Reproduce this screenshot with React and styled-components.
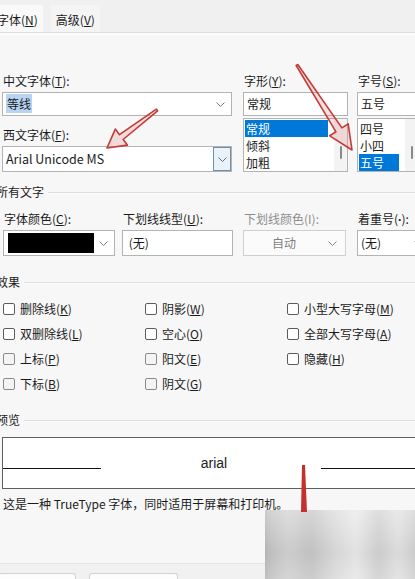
import React from "react";
import styled, { createGlobalStyle } from "styled-components";

const GlobalStyle = createGlobalStyle`
  html, body {
    margin: 0;
    padding: 0;
    background: #f7f7f7;
    overflow: hidden;
  }
  body {
    font-family: "Noto Sans CJK SC", "Noto Sans", sans-serif;
    font-size: 12px;
    color: #1b1b1b;
  }
  u {
    text-underline-offset: 1px;
  }
`;

const Page = styled.div`
  position: relative;
  width: 415px;
  height: 579px;
  overflow: hidden;
  background: #f7f7f7;
`;

const TabStrip = styled.div`
  display: flex;
  align-items: flex-end;
  gap: 8px;
  height: 32px;
  background: #f0f0f0;
  border-bottom: 1px solid #dedede;
  box-shadow: 0 3px 0 #fbfbfb;
`;

const Tab = styled.div`
  height: 27px;
  line-height: 29px;
  padding: 0 5px;
  margin-left: ${(p) => (p.$first ? "-8px" : "0")};
  background: ${(p) => (p.$active ? "#f9f9f9" : "#f4f4f4")};
`;

const Body = styled.div`
  padding: 41px 0 0 2px;
`;

const FontRow = styled.div`
  display: grid;
  grid-template-columns: 241px 114px 1fr;
`;

const Column = styled.div`
  display: flex;
  flex-direction: column;
`;

const Label = styled.div`
  height: 14px;
  line-height: 14px;
  padding-left: 1px;
  margin: ${(p) => p.$mt || 0}px 0 4px;
  white-space: nowrap;
  color: ${(p) => (p.$disabled ? "#8e8e8e" : "#1b1b1b")};
`;

const Dot = styled.span`
  font-family: "Noto Sans", sans-serif;
  font-weight: 700;
  line-height: 1;
`;

const Combo = styled.div`
  display: flex;
  align-items: center;
  box-sizing: border-box;
  width: ${(p) => p.$w}px;
  height: ${(p) => p.$h || 24}px;
  border: 1px solid ${(p) => (p.$disabled ? "#cfcfcf" : "#b3b3b3")};
  background: ${(p) => (p.$disabled ? "#fbfbfb" : "#fff")};
  padding-left: 3px;
  white-space: nowrap;
  overflow: hidden;
`;

const ComboValue = styled.span`
  flex: 1;
  line-height: 16px;
  text-align: ${(p) => (p.$center ? "center" : "left")};
  color: ${(p) => (p.$disabled ? "#7f7f7f" : "#1b1b1b")};
  font-size: ${(p) => p.$size || 12}px;
`;

const Selected = styled.span`
  background: #b7d5f2;
  padding: 1px 1px;
`;

const Arrow = styled.span`
  display: flex;
  align-items: center;
  justify-content: center;
  width: ${(p) => p.$w || 18}px;
  align-self: stretch;
  margin-right: ${(p) => p.$mr ?? 0}px;
`;

const DropButton = styled.span`
  display: flex;
  align-items: center;
  justify-content: center;
  width: 16px;
  align-self: stretch;
  border: 1px solid #6f8faa;
  background: #eaf2f9;
`;

const Swatch = styled.span`
  width: 86px;
  height: 20px;
  margin-left: 1px;
  background: #000;
`;

const ListBox = styled.div`
  display: flex;
  box-sizing: border-box;
  width: ${(p) => p.$w}px;
  height: 54px;
  margin-top: 2px;
  border: 1px solid #b3b3b3;
  background: #fff;
  overflow: hidden;
`;

const ListItems = styled.div`
  flex: 1;
  display: flex;
  flex-direction: column;
  padding: 1px 6px 0 1px;
`;

const ListItem = styled.div`
  height: 17px;
  line-height: 17px;
  padding-left: 1px;
  background: ${(p) => (p.$selected ? "#0078d7" : "transparent")};
  color: ${(p) => (p.$selected ? "#fff" : "#1b1b1b")};
`;

const ScrollTrack = styled.div`
  display: flex;
  align-items: center;
  justify-content: center;
  width: 13px;
  background: #f3f3f3;
`;

const Thumb = styled.span`
  width: 2px;
  height: 13px;
  margin-top: 14px;
  border-radius: 1px;
  background: #8a8a8a;
`;

const GroupHead = styled.div`
  display: flex;
  align-items: center;
  gap: 4px;
  margin: ${(p) => p.$mt}px 0 0 -6px;
  line-height: 14px;
  white-space: nowrap;

  &::after {
    content: "";
    flex: 1;
    height: 1px;
    background: #dcdcdc;
    box-shadow: 0 1px 0 #fff;
  }
`;

const AttrRow = styled.div`
  display: grid;
  grid-template-columns: 119px 121px 114px 1fr;
  margin: 13px 0 0 1px;
`;

const CheckGrid = styled.div`
  display: grid;
  grid-template-columns: 142px 142px 1fr;
  grid-auto-rows: 25px;
  margin: 7px 0 0 1px;
`;

const Check = styled.label`
  display: flex;
  align-items: center;
  gap: 5px;
  white-space: nowrap;
`;

const Box = styled.span`
  box-sizing: border-box;
  width: 12px;
  height: 12px;
  border: 1px solid ${(p) => (p.$dim ? "#8b8b8b" : "#5c5c5c")};
  border-radius: 2px;
  background: ${(p) => (p.$dim ? "#f4f4f4" : "#fff")};
`;

const Preview = styled.div`
  display: flex;
  align-items: center;
  box-sizing: border-box;
  width: 430px;
  height: 52px;
  margin-top: 10px;
  border: 1px solid #5f5f5f;
  background: #fff;
`;

const Rule = styled.span`
  width: ${(p) => p.$w}px;
  height: 1px;
  margin-top: 10px;
  background: #111;
`;

const Sample = styled.span`
  flex: 1;
  text-align: center;
  font-family: "Liberation Sans", Arial, sans-serif;
  font-size: 14px;
  color: #222;
  padding-left: 6px;
`;

const Note = styled.div`
  margin: 8px 0 0 1px;
  line-height: 14px;
  white-space: nowrap;
`;

const Footer = styled.div`
  display: flex;
  gap: 13px;
  height: 20px;
  margin: 52px 0 0 -2px;
  padding-top: 9px;
  border-top: 1px solid #e4e4e4;
  background: #f1f1f1;
`;

const FooterButton = styled.div`
  width: ${(p) => p.$w}px;
  margin-left: ${(p) => p.$ml || 0}px;
  border: 1px solid #d3d3d3;
  border-bottom: none;
  border-radius: 3px 3px 0 0;
  background: #fdfdfd;
`;

const Marks = styled.svg`
  position: absolute;
  inset: 0;
  pointer-events: none;
`;

const Smudge = styled.div`
  position: absolute;
  left: 265px;
  top: 510px;
  width: 150px;
  height: 69px;
  overflow: hidden;

  &::before {
    content: "";
    position: absolute;
    inset: -6px;
    filter: blur(2.5px);
    background:
      linear-gradient(180deg, rgba(255, 255, 255, 0.3), rgba(0, 0, 0, 0.04) 60%, rgba(255, 255, 255, 0.1)),
      linear-gradient(90deg, #aeaeae 0, #c6c6c6 7%, #d4d4d4 18%, #c8c8c8 32%, #dcdcdc 46%, #ebebeb 60%, #d3d3d3 74%, #e4e4e4 86%, #cdcdcd 100%);
  }
`;

const Chevron = ({ color = "#7d7d7d" }) => (
  <svg width="9" height="5" viewBox="0 0 9 5">
    <polyline points="0.5,0.5 4.5,4.5 8.5,0.5" fill="none" stroke={color} strokeWidth="1" />
  </svg>
);

// hollow annotation arrow from tail to tip
const arrowShape = ([x1, y1], [x2, y2], tailHalf, shaft, headLen, headHalf) => {
  const len = Math.hypot(x2 - x1, y2 - y1);
  const ux = (x2 - x1) / len;
  const uy = (y2 - y1) / len;
  const nx = -uy;
  const ny = ux;
  const bx = x2 - ux * headLen;
  const by = y2 - uy * headLen;
  const pts = [
    [x1 + nx * tailHalf, y1 + ny * tailHalf],
    [bx + nx * shaft, by + ny * shaft],
    [bx + nx * headHalf, by + ny * headHalf],
    [x2, y2],
    [bx - nx * headHalf, by - ny * headHalf],
    [bx - nx * shaft, by - ny * shaft],
    [x1 - nx * tailHalf, y1 - ny * tailHalf],
  ];
  return pts.map((p) => p.map((v) => v.toFixed(1)).join(",")).join(" ");
};

const styleItems = [
  { text: "常规", selected: true },
  { text: "倾斜" },
  { text: "加粗" },
];

const sizeItems = [{ text: "四号" }, { text: "小四" }, { text: "五号", selected: true }];

const effects = [
  ["删除线", "K", false],
  ["阴影", "W", false],
  ["小型大写字母", "M", false],
  ["双删除线", "L", false],
  ["空心", "O", false],
  ["全部大写字母", "A", false],
  ["上标", "P", true],
  ["阳文", "E", true],
  ["隐藏", "H", false],
  ["下标", "B", true],
  ["阴文", "G", true],
];

const List = ({ items, width }) => (
  <ListBox $w={width}>
    <ListItems>
      {items.map((item) => (
        <ListItem key={item.text} $selected={item.selected}>
          {item.text}
        </ListItem>
      ))}
    </ListItems>
    <ScrollTrack>
      <Thumb />
    </ScrollTrack>
  </ListBox>
);

export default function App() {
  return (
    <Page>
      <GlobalStyle />
      <TabStrip>
        <Tab $first $active>
          字体(<u>N</u>)
        </Tab>
        <Tab>
          高级(<u>V</u>)
        </Tab>
      </TabStrip>

      <Body>
        <FontRow>
          <Column>
            <Label>
              中文字体(<u>T</u>):
            </Label>
            <Combo $w={230}>
              <ComboValue>
                <Selected>等线</Selected>
              </ComboValue>
              <Arrow $w={14} $mr={4}>
                <Chevron />
              </Arrow>
            </Combo>
            <Label $mt={12}>
              西文字体(<u>F</u>):
            </Label>
            <Combo $w={230} $h={26}>
              <ComboValue $size={12.5}>Arial Unicode MS</ComboValue>
              <DropButton>
                <Chevron color="#5b6f80" />
              </DropButton>
            </Combo>
          </Column>

          <Column>
            <Label>
              字形(<u>Y</u>):
            </Label>
            <Combo $w={105}>
              <ComboValue>常规</ComboValue>
            </Combo>
            <List items={styleItems} width={105} />
          </Column>

          <Column>
            <Label>
              字号(<u>S</u>):
            </Label>
            <Combo $w={70}>
              <ComboValue>五号</ComboValue>
            </Combo>
            <List items={sizeItems} width={62} />
          </Column>
        </FontRow>

        <GroupHead $mt={13}>所有文字</GroupHead>

        <AttrRow>
          <Column>
            <Label>
              字体颜色(<u>C</u>):
            </Label>
            <Combo $w={112} $h={26}>
              <Swatch />
              <ComboValue />
              <Arrow $w={16} $mr={3}>
                <Chevron />
              </Arrow>
            </Combo>
          </Column>
          <Column>
            <Label>
              下划线线型(<u>U</u>):
            </Label>
            <Combo $w={111} $h={26}>
              <ComboValue>&nbsp;(无)</ComboValue>
            </Combo>
          </Column>
          <Column>
            <Label $disabled>下划线颜色(I):</Label>
            <Combo $w={103} $h={26} $disabled>
              <ComboValue $center $disabled>
                自动
              </ComboValue>
              <Arrow $w={22} $mr={2}>
                <Chevron color="#8a8a8a" />
              </Arrow>
            </Combo>
          </Column>
          <Column>
            <Label>
              着重号(<Dot>·</Dot>):
            </Label>
            <Combo $w={72} $h={26}>
              <ComboValue>(无)</ComboValue>
              <Arrow $w={16} $mr={2}>
                <Chevron />
              </Arrow>
            </Combo>
          </Column>
        </AttrRow>

        <GroupHead $mt={19}>效果</GroupHead>

        <CheckGrid>
          {effects.map(([text, key, dim]) => (
            <Check key={key}>
              <Box $dim={dim} />
              <span>
                {text}(<u>{key}</u>)
              </span>
            </Check>
          ))}
        </CheckGrid>

        <GroupHead $mt={17}>预览</GroupHead>

        <Preview>
          <Rule $w={98} />
          <Sample>arial</Sample>
          <Rule $w={110} />
        </Preview>

        <Note>这是一种 TrueType 字体，同时适用于屏幕和打印机。</Note>

        <Footer>
          <FooterButton $w={76} $ml={-2} />
          <FooterButton $w={87} />
        </Footer>
      </Body>

      <Smudge />

      <Marks width="415" height="579" viewBox="0 0 415 579">
        <g fill="rgba(226, 130, 130, 0.25)" stroke="#c43a36" strokeWidth="1.6" strokeLinejoin="round">
          <polygon points={arrowShape([297, 65], [352, 150], 1, 3.5, 24, 11)} />
          <polygon points={arrowShape([157, 110], [107, 148], 1, 3, 18, 10)} />
        </g>
        <polygon points="302,465 305,465 307,512 301,512" fill="#c4302c" />
      </Marks>
    </Page>
  );
}
